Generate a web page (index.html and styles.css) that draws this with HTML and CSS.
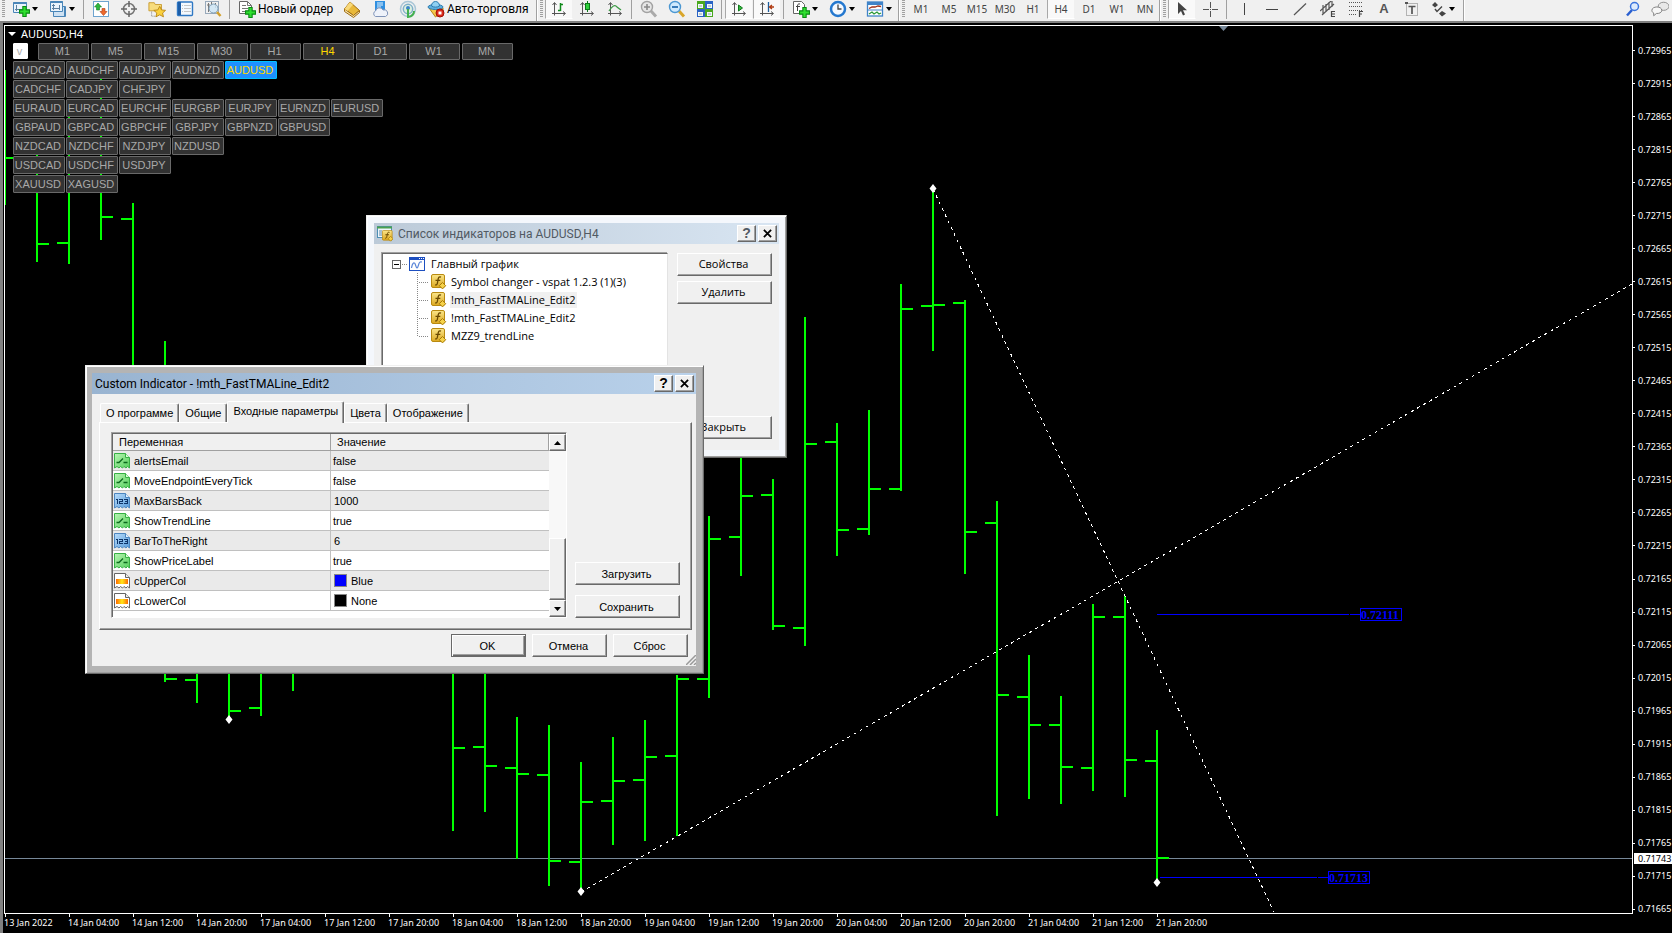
FILE: index.html
```html
<!DOCTYPE html>
<html lang="ru">
<head>
<meta charset="utf-8">
<title>AUDUSD,H4</title>
<link rel="stylesheet" href="styles.css">
</head>
<body>
<svg class="defs" aria-hidden="true">
  <defs>
    <linearGradient id="gold" x1="0" y1="0" x2="0" y2="1"><stop offset="0" stop-color="#fbe68a"/><stop offset="1" stop-color="#dca820"/></linearGradient>
    <linearGradient id="green" x1="0" y1="0" x2="1" y2="1"><stop offset="0" stop-color="#b9f5b4"/><stop offset="1" stop-color="#55cf5c"/></linearGradient>
    <linearGradient id="blue" x1="0" y1="0" x2="1" y2="1"><stop offset="0" stop-color="#b8dcfa"/><stop offset="1" stop-color="#5a9ddb"/></linearGradient>
    <linearGradient id="heat"><stop offset="0" stop-color="#ff6a00"/><stop offset=".5" stop-color="#ffe81a"/><stop offset="1" stop-color="#ff6a00"/></linearGradient>
    <symbol id="plus" viewBox="0 0 10 10"><path d="M3.5.5h3v3h3v3h-3v3h-3v-3h-3v-3h3z" fill="#2fe02f" stroke="#0a8a14"/></symbol>
    <symbol id="axes" viewBox="0 0 16 16"><path d="M3.500 2v12.500M1 12.500h13M1.500 4l2-2.500 2 2.500M12 10.500l2.500 2-2.500 2" fill="none" stroke="#555"/></symbol>
    <symbol id="func" viewBox="0 0 16 16"><rect x=".5" y=".5" width="13" height="13" rx="1.500" fill="url(#gold)" stroke="#b98a10"/><path d="M10 3.200c-1.600-.7-2.500 0-2.800 1.800l-.9 4.500c-.2 1.200-.9 1.700-2.200 1.300M4.500 6.300h4.800" fill="none" stroke="#6b4a00" stroke-width="1.300"/><path d="M11.500 8.500l3.200 3.200-3.200 3.200-3.200-3.200z" fill="#f6d24a" stroke="#a87a08"/></symbol>
    <symbol id="bool" viewBox="0 0 16 16"><path d="M.5 15V.500h11l4 4V15l-2-1.500-1.500 1.500-2-1.500L8.500 15l-2-1.500L5 15l-2-1.500z" fill="url(#green)" stroke="#36b044"/><path d="M11.500.500v4h4" fill="#d8ffd5" stroke="#36b044"/><path d="M2.500 9.500h2.500l4-4M9.500 9.500h4" fill="none" stroke="#0b6a1c" stroke-width="1.300"/></symbol>
    <symbol id="int" viewBox="0 0 16 16"><path d="M.5 15V.500h11l4 4V15l-2-1.500-1.500 1.500-2-1.500L8.500 15l-2-1.500L5 15l-2-1.500z" fill="url(#blue)" stroke="#4d86bf"/><path d="M11.500.500v4h4" fill="#e4f2ff" stroke="#4d86bf"/><path d="M2 6.500h1.500V11M5 6.500h3.500v2H5.500v2H9M10 6.500h3.500v4H10M11 8.500h2.500" fill="none" stroke="#0d3468" shape-rendering="crispEdges"/></symbol>
    <symbol id="color" viewBox="0 0 16 16"><path d="M.5 15V.500h11l4 4V15l-2-1.500-1.500 1.500-2-1.500L8.500 15l-2-1.500L5 15l-2-1.500z" fill="#fff" stroke="#666"/><path d="M11.500.500v4h4" fill="#eee" stroke="#666"/><rect x="2" y="6" width="12" height="5" fill="url(#heat)"/></symbol>
    <symbol id="shift" viewBox="0 0 16 16"><path d="M1 4l3-3 3 3-3 2.500zM8 12.500L11 10l4 2.500-4 3z" fill="#444"/><path d="M4 8l2 2.500 5-5" fill="none" stroke="#444" stroke-width="1.400"/></symbol>
  </defs>
</svg>

<header class="toolbar">
  <span class="grip"></span>
  <button class="tool drop" aria-label="Новый график"><svg viewBox="0 0 18 18"><path d="M1.500 2.500h13v10h-13z" fill="#eaf4fc" stroke="#4a86b8"/><path d="M1.500 3h13" stroke="#4a86b8" stroke-width="2"/><path d="M4.500 5v6M3 9.500h7" stroke="#5b7f9e"/><use href="#plus" x="7" y="6" width="11" height="11"/></svg></button>
  <button class="tool drop" aria-label="Профили"><svg viewBox="0 0 18 18"><path d="M4.500 6.500h12v10h-12z" fill="#cfe2f3" stroke="#4a86b8"/><path d="M1.500 1.500h12v10h-12z" fill="#eaf4fc" stroke="#4a86b8"/><path d="M1.500 2h12M16 7v9" stroke="#4a86b8" stroke-width="2"/><path d="M4.500 4v6M3 8.500h8M10.500 5v5M3 5.500h3" stroke="#5b7f9e"/></svg></button>
  <span class="sep"></span>
  <button class="tool" aria-label="Обзор рынка"><svg viewBox="0 0 18 18"><rect x="1.500" y="1.500" width="15" height="15" fill="#fff" stroke="#6ea4cf"/><path d="M6 3l3.500 4H7.500v3h-3V7h-2z" fill="#2eb83c" stroke="#16802a" stroke-width=".6"/><path d="M11.500 15.500L8 11.500h2v-3h3v3h2z" fill="#ee6a2c" stroke="#b03a10" stroke-width=".6"/></svg></button>
  <button class="tool" aria-label="Окно данных"><svg viewBox="0 0 18 18"><circle cx="9" cy="9" r="5.500" fill="none" stroke="#777" stroke-width="1.500"/><path d="M9 1v6M9 11v6M1 9h6M11 9h6" stroke="#666" stroke-width="1.500"/></svg></button>
  <button class="tool" aria-label="Навигатор"><svg viewBox="0 0 20 18"><path d="M1 2h6l1 2h7v7H1z" fill="#f7dc7c" stroke="#c79a2e"/><path d="M4 12v5h6" stroke="#777" fill="none" stroke-dasharray="1 1"/><path d="M13 6l2 4 4.500.500-3.300 3 1 4.200L13 15.500 8.800 17.700l1-4.200-3.300-3L11 10z" fill="#fbd13c" stroke="#b98412"/></svg></button>
  <button class="tool" aria-label="Терминал"><svg viewBox="0 0 18 18"><rect x="1.500" y="2" width="15" height="13.500" rx="1" fill="#f4f9fe" stroke="#2f78c4" stroke-width="1.400"/><path d="M3.500 2v13" stroke="#1d5ea8" stroke-width="3"/><path d="M6 5.500h1m1 0h7M6 8.500h1m1 0h7M6 11.500h1m1 0h7" stroke="#c6c6c6"/></svg></button>
  <button class="tool" aria-label="Тестер стратегий"><svg viewBox="0 0 18 18"><rect x="1.500" y="1.500" width="13" height="12" fill="#f1f1f1" stroke="#9ab"/><path d="M4.500 3v9M7.500 2v4M11.500 3v5M3 5h3" stroke="#777"/><circle cx="9.500" cy="8.500" r="4.500" fill="#cfe6f6" fill-opacity=".85" stroke="#7d9db5"/><path d="M13 12l3.500 4" stroke="#d2a02c" stroke-width="2.500"/></svg></button>
  <span class="sep"></span>
  <button class="tool label order"><svg viewBox="0 0 18 18"><path d="M1.500 1.500h8l4 4v8h-12z" fill="#fff" stroke="#666"/><path d="M9.500 1.500v4h4M4 5.500h4M4 8.500h6M4 11.500h4" stroke="#777" fill="none"/><use href="#plus" x="7" y="7" width="11" height="11"/></svg>Новый ордер</button>
  <button class="tool" aria-label="MetaEditor"><svg viewBox="0 0 18 18"><path d="M7 2l9.500 8.500-6 5L1.500 9z" fill="#e9b93a" stroke="#a06c10"/><path d="M1.500 9v2.500l9 6 6-5v-2l-6 5z" fill="#f5e4ae" stroke="#a06c10"/><path d="M7 2L1.500 9l3 2L10 4.700z" fill="#f8d97a"/></svg></button>
  <button class="tool" aria-label="Облако"><svg viewBox="0 0 18 18"><rect x="4" y="1" width="10" height="10" fill="#2f8fe0"/><path d="M6 3h6M6 5h6M6 7h4" stroke="#e4f3ff"/><path d="M4.500 16.500a3 3 0 010-5.500 4 4 0 017.500-1 3.300 3.300 0 012.500 6.500z" fill="#eef2fa" stroke="#7f93b8"/></svg></button>
  <button class="tool" aria-label="Сигналы"><svg viewBox="0 0 18 18"><circle cx="9" cy="9" r="7.500" fill="none" stroke="#a9c6d6" stroke-width="1.500"/><circle cx="9" cy="9" r="4.700" fill="#dcefe0" stroke="#7fb0c8" stroke-width="1.500"/><circle cx="9" cy="8" r="2" fill="#3c86c8"/><path d="M9 9v8c4-.6 6-3 6-6" fill="none" stroke="#42b050" stroke-width="2"/></svg></button>
  <button class="tool label auto"><svg viewBox="0 0 18 18"><path d="M2 8l6.500 9L16 11V8z" fill="#f4c84a" stroke="#b58418"/><ellipse cx="8.500" cy="7" rx="7.500" ry="2.500" fill="#5fb0e0" stroke="#2d7cb0"/><path d="M4.500 6c0-6 8-6 8 0-2 1.500-6 1.500-8 0z" fill="#8fd0f2" stroke="#2d7cb0"/><circle cx="13" cy="13" r="4" fill="#dd2a1a" stroke="#a01208"/><rect x="11.500" y="11.500" width="3" height="3" fill="#fff"/></svg>Авто-торговля</button>
  <span class="edge"></span>
  <span class="grip"></span>
  <button class="tool on" aria-label="Бары"><svg viewBox="0 0 16 16"><use href="#axes"/><path d="M9.500 2v8M7 9.500h2.500M9.500 3.500H12" stroke="#108a1c" stroke-width="1.500"/></svg></button>
  <button class="tool" aria-label="Свечи"><svg viewBox="0 0 16 16"><use href="#axes"/><path d="M8.500 0v11" stroke="#0a7a18"/><rect x="6.500" y="2.500" width="4" height="6" fill="#2fd03c" stroke="#0a7a18"/></svg></button>
  <button class="tool" aria-label="Линия"><svg viewBox="0 0 16 16"><use href="#axes"/><path d="M2 10c3-5 6-7 8-4l4 3" fill="none" stroke="#3a9a44" stroke-width="1.300"/></svg></button>
  <span class="sep"></span>
  <button class="tool" aria-label="Увеличить"><svg viewBox="0 0 18 18"><path d="M11 11l5 5.500" stroke="#aaa" stroke-width="3"/><circle cx="7" cy="7" r="5.500" fill="#e6e6e6" stroke="#a2a2a2" stroke-width="1.400"/><path d="M7 4v6M4 7h6" stroke="#8a8a8a" stroke-width="1.600"/></svg></button>
  <button class="tool" aria-label="Уменьшить"><svg viewBox="0 0 18 18"><path d="M11 11l5 5.500" stroke="#d9a62a" stroke-width="3"/><circle cx="7" cy="7" r="5.500" fill="#cfeafd" stroke="#4b97d2" stroke-width="1.400"/><path d="M4 7h6" stroke="#276fb0" stroke-width="1.800"/></svg></button>
  <button class="tool" aria-label="Плитка"><svg viewBox="0 0 18 18"><path d="M1 1h8v8H1zM9 9h8v8H9z" fill="#4aa81e"/><path d="M9 1h8v8H9zM1 9h8v8H1z" fill="#2a63c4"/><path d="M2 4h5v4H2zM11 4h5v4h-5zM2 12h5v4H2zM11 12h5v4h-5z" fill="#f2f6fb"/><path d="M3 6h3M12 6h3M3 14h3M12 14h3" stroke="#8aa"/></svg></button>
  <span class="sep"></span>
  <button class="tool on" aria-label="Автопрокрутка"><svg viewBox="0 0 16 16"><use href="#axes"/><path d="M7.500 4v6l4-3z" fill="#35b83e" stroke="#107a1c"/></svg></button>
  <button class="tool on" aria-label="Сдвиг графика"><svg viewBox="0 0 16 16"><use href="#axes"/><path d="M9.500 1v10" stroke="#1c5c9c" stroke-width="1.300"/><path d="M15 6h-4M13 4l-2.500 2L13 8" fill="none" stroke="#b03a10" stroke-width="1.300"/></svg></button>
  <span class="sep"></span>
  <button class="tool drop" aria-label="Индикаторы"><svg viewBox="0 0 18 18"><path d="M1.500 1.500h8l3 3v9h-11z" fill="#fff" stroke="#666"/><path d="M8 4c-2-.6-2.300.500-2.500 2v5M4 6.500h4" stroke="#444" fill="none"/><use href="#plus" x="7" y="7" width="11" height="11"/></svg></button>
  <button class="tool drop" aria-label="Периоды"><svg viewBox="0 0 18 18"><circle cx="9" cy="9" r="7" fill="#f4f9ff" stroke="#2478cf" stroke-width="2.500"/><path d="M9 4.500V9h3.500" fill="none" stroke="#444" stroke-width="1.300"/></svg></button>
  <button class="tool drop" aria-label="Шаблоны"><svg viewBox="0 0 18 18"><rect x="1.500" y="2" width="15" height="14" fill="#fff" stroke="#3f83c8" stroke-width="1.300"/><path d="M1 3.500h16" stroke="#3f83c8" stroke-width="3"/><path d="M2 10h14" stroke="#3f83c8"/><path d="M3 8.500l3-1.500h3l3-1 3 .5" stroke="#a03018" fill="none" stroke-width="1.300"/><path d="M3 14l3-2 2 2 3-2 2 2 2-1" stroke="#2c9838" fill="none" stroke-width="1.200"/></svg></button>
  <span class="edge"></span>
  <span class="grip"></span>
  <button class="tool tf">M1</button><button class="tool tf">M5</button><button class="tool tf">M15</button><button class="tool tf">M30</button><button class="tool tf">H1</button><button class="tool tf on">H4</button><button class="tool tf">D1</button><button class="tool tf">W1</button><button class="tool tf">MN</button>
  <span class="edge"></span>
  <span class="grip"></span>
  <button class="tool on" aria-label="Курсор"><svg viewBox="0 0 16 16"><path d="M4 1v12l3-3 2 4.500 2-1L9 9.300h4z" fill="#444"/></svg></button>
  <button class="tool" aria-label="Перекрестие"><svg viewBox="0 0 16 16"><path d="M8.500 1v6M8.500 10v6M1 8.500h6M10 8.500h6M8 8.500h1" stroke="#555"/></svg></button>
  <span class="sep"></span>
  <button class="tool" aria-label="Вертикальная линия"><svg viewBox="0 0 16 16"><path d="M8.500 2v12" stroke="#444"/></svg></button>
  <button class="tool" aria-label="Горизонтальная линия"><svg viewBox="0 0 16 16"><path d="M2 8.500h12" stroke="#444"/></svg></button>
  <button class="tool" aria-label="Трендовая линия"><svg viewBox="0 0 16 16"><path d="M2 14L14 2.500" stroke="#555" stroke-width="1.200"/></svg></button>
  <button class="tool" aria-label="Канал"><svg viewBox="0 0 16 16"><path d="M0 10L11 0M2 14L14 3M3 4v9M6 3v8M9 1v8M12 0v6" stroke="#555" stroke-width="1.200"/><path d="M15 10.500h-3.500v5H15M11.500 13H15" fill="none" stroke="#444" stroke-width="1.200"/></svg></button>
  <button class="tool" aria-label="Фибоначчи"><svg viewBox="0 0 16 16"><path d="M1 1.500h14M1 5.500h14M1 9.500h14M1 13.500h8" stroke="#555" stroke-dasharray="1 1"/><path d="M15 10.500h-3.500V16M11.500 13H14" fill="none" stroke="#444" stroke-width="1.200"/></svg></button>
  <button class="tool letter">A</button>
  <button class="tool" aria-label="Метка"><svg viewBox="0 0 16 16"><rect x="2.500" y="2.500" width="11" height="12" fill="none" stroke="#777" stroke-dasharray="1 1"/><path d="M1 1h3v2H1z" fill="#555"/><path d="M4.500 5.500h7M8 5.500V13" stroke="#555" stroke-width="1.700" fill="none"/></svg></button>
  <button class="tool drop" aria-label="Стрелки"><svg viewBox="0 0 16 16"><use href="#shift"/></svg></button>
  <span class="edge"></span>
  <span class="fill"></span>
  <button class="tool" aria-label="Поиск"><svg viewBox="0 0 16 16"><path d="M7 9l-5 5.500" stroke="#2a5fd0" stroke-width="2.500"/><circle cx="9.500" cy="5.500" r="4" fill="#dceafc" stroke="#3b74dc" stroke-width="1.500"/></svg></button>
  <button class="tool chat" aria-label="Сообщество"><svg viewBox="0 0 20 18"><ellipse cx="14" cy="6" rx="6" ry="4.500" fill="#e8e8e8" stroke="#888"/><path d="M1 10.500c0-5 11-5 11 0 0 2.500-3 3.700-6 3.500l-3 2.500v-3c-1.300-.6-2-1.600-2-3z" fill="#f6f6f6" stroke="#777"/></svg></button>
</header>

<main class="chart">
  <section class="plot">
    <svg class="series" width="100%" height="100%" aria-label="AUDUSD H4">
      <g transform="translate(-5 -26)">
        <path class="price-line" d="M5 858.500H1640"/>
        <path class="bars" d="M5 70V205M5 158h9
        M37 150V262M37 244h12 M69 115V264M57 243h12 M101 76V240M101 217h12 M133 203V640M121 219h12
        M165 341V682M165 679h12 M197 600V703M185 680h12 M229 600V718M229 711h12 M261 600V716M249 708h12 M293 600V691
        M453 600V831M453 748h12 M485 600V812M473 747h12M485 766h12 M517 717V859M505 768h12M517 774h12
        M549 725V886M537 775h12M549 861h12 M581 762V888M569 862h12M581 802h12 M613 737V845M601 801h12M613 781h12
        M645 720V841M633 780h12M645 757h12 M677 675V836M665 756h12M677 679h12 M709 516V698M697 679h12M709 539h12
        M741 440V576M729 537h12M741 496h12 M773 479V630M761 495h12M773 626h12 M805 317V646M793 628h12M805 444h12
        M837 423V556M825 442h12M837 530h12 M869 410V535M857 529h12M869 489h12 M901 284V491M889 489h12M901 309h12
        M933 190V351M921 306h12M933 305h12 M965 300V574M953 303h12M965 532h12 M997 501V816M985 523h12M997 695h12
        M1029 655V799M1017 697h12M1029 725h12 M1061 696V804M1049 725h12M1061 767h12 M1093 604V791M1081 768h12M1093 617h12
        M1125 596V797M1113 617h12M1125 760h12 M1157 730V880M1145 761h12M1157 858h12"/>
        <path class="trend" d="M933 189L1274 912M581 892L1632 284"/>
        <path class="marks" d="M933 184l3.500 4.500-3.500 4.500-3.500-4.500zM229 715l3.500 4.500-3.500 4.500-3.500-4.500zM581 887l3.500 4.500-3.500 4.500-3.500-4.500zM1157 878l3.500 4.500-3.500 4.500-3.500-4.500z"/>
        <path class="levels" d="M1157 614.500h192m1 0h10M1160 877.500h157m1 0h10M1360.500 608.500h41v12h-41zM1328.500 871.500h41v12h-41z"/>
        <text class="level-text" x="1361" y="619">0.72111</text>
        <text class="level-text" x="1329" y="882">0.71713</text>
        <path d="M1219 26h9l-4.500 5z" fill="#778899"/>
      </g>
    </svg>

    <div class="panel">
      <h1 class="symbol">AUDUSD,H4</h1>
      <div class="row frames">
        <button class="toggle">v</button>
        <button>M1</button><button>M5</button><button>M15</button><button>M30</button><button>H1</button><button class="active">H4</button><button>D1</button><button>W1</button><button>MN</button>
      </div>
      <div class="row"><button>AUDCAD</button><button>AUDCHF</button><button>AUDJPY</button><button>AUDNZD</button><button class="current">AUDUSD</button></div>
      <div class="row"><button>CADCHF</button><button>CADJPY</button><button>CHFJPY</button></div>
      <div class="row"><button>EURAUD</button><button>EURCAD</button><button>EURCHF</button><button>EURGBP</button><button>EURJPY</button><button>EURNZD</button><button>EURUSD</button></div>
      <div class="row"><button>GBPAUD</button><button>GBPCAD</button><button>GBPCHF</button><button>GBPJPY</button><button>GBPNZD</button><button>GBPUSD</button></div>
      <div class="row"><button>NZDCAD</button><button>NZDCHF</button><button>NZDJPY</button><button>NZDUSD</button></div>
      <div class="row"><button>USDCAD</button><button>USDCHF</button><button>USDJPY</button></div>
      <div class="row"><button>XAUUSD</button><button>XAGUSD</button></div>
    </div>
  </section>

  <ol class="times">
    <li>13 Jan 2022</li><li>14 Jan 04:00</li><li>14 Jan 12:00</li><li>14 Jan 20:00</li><li>17 Jan 04:00</li><li>17 Jan 12:00</li><li>17 Jan 20:00</li><li>18 Jan 04:00</li><li>18 Jan 12:00</li><li>18 Jan 20:00</li><li>19 Jan 04:00</li><li>19 Jan 12:00</li><li>19 Jan 20:00</li><li>20 Jan 04:00</li><li>20 Jan 12:00</li><li>20 Jan 20:00</li><li>21 Jan 04:00</li><li>21 Jan 12:00</li><li>21 Jan 20:00</li>
  </ol>

  <div class="scale">
    <ol class="prices">
      <li>0.72965</li><li>0.72915</li><li>0.72865</li><li>0.72815</li><li>0.72765</li><li>0.72715</li><li>0.72665</li><li>0.72615</li><li>0.72565</li><li>0.72515</li><li>0.72465</li><li>0.72415</li><li>0.72365</li><li>0.72315</li><li>0.72265</li><li>0.72215</li><li>0.72165</li><li>0.72115</li><li>0.72065</li><li>0.72015</li><li>0.71965</li><li>0.71915</li><li>0.71865</li><li>0.71815</li><li>0.71765</li><li>0.71715</li><li>0.71665</li>
    </ol>
    <span class="bid">0.71743</span>
  </div>
</main>

<section class="window list-window" aria-label="Список индикаторов">
  <header class="caption">
    <svg class="caption-icon" viewBox="0 0 16 16"><rect x=".5" y=".5" width="14" height="11" fill="#eef5fb" stroke="#4d8fb5"/><path d="M0 1.500h15" stroke="#4ba04f" stroke-width="2"/><path d="M2 5h3M2 7h3M2 9h3" stroke="#5d89a8"/><use href="#func" x="5" y="4" width="12" height="12"/></svg>
    <h2>Список индикаторов на AUDUSD,H4</h2>
    <button class="sys">?</button><button class="sys" aria-label="Закрыть окно"><svg viewBox="0 0 10 10"><path d="M1 1l8 8M9 1L1 9" stroke="#000" stroke-width="2"/></svg></button>
  </header>
  <div class="list-body">
    <ul class="tree">
      <li class="root"><svg class="fold" viewBox="0 0 16 9"><rect x=".5" y=".5" width="8" height="8" fill="#fff" stroke="#666"/><path d="M2 4.500h5" stroke="#000"/><path d="M10 4.500h6" stroke="#888" stroke-dasharray="1 1"/></svg><svg class="node" viewBox="0 0 16 14"><rect x=".5" y=".5" width="15" height="13" fill="#fff" stroke="#1d4fc0"/><path d="M0 1.500h16" stroke="#1d4fc0" stroke-width="3"/><path d="M10 1.500h1m1 0h1m1 0h1" stroke="#fff"/><path d="M2.500 11c1-6 3-6.500 4-3s2 4 3 0 2-3 3.500-3" fill="none" stroke="#5a86d8" stroke-width="1.200"/></svg><span>Главный график</span></li>
      <li><svg class="node" viewBox="0 0 16 16"><use href="#func"/></svg><span>Symbol changer - vspat 1.2.3 (1)(3)</span></li>
      <li><svg class="node" viewBox="0 0 16 16"><use href="#func"/></svg><span class="picked">!mth_FastTMALine_Edit2</span></li>
      <li><svg class="node" viewBox="0 0 16 16"><use href="#func"/></svg><span>!mth_FastTMALine_Edit2</span></li>
      <li><svg class="node" viewBox="0 0 16 16"><use href="#func"/></svg><span>MZZ9_trendLine</span></li>
    </ul>
    <div class="side">
      <button class="push">Свойства</button>
      <button class="push">Удалить</button>
      <button class="push last">Закрыть</button>
    </div>
  </div>
</section>

<section class="window input-window" aria-label="Custom Indicator">
  <header class="caption">
    <h2>Custom Indicator - !mth_FastTMALine_Edit2</h2>
    <button class="sys">?</button><button class="sys" aria-label="Закрыть окно"><svg viewBox="0 0 10 10"><path d="M1 1l8 8M9 1L1 9" stroke="#000" stroke-width="2"/></svg></button>
  </header>
  <div class="input-body">
    <div class="tabs" role="tablist">
      <button role="tab">О программе</button><button role="tab">Общие</button><button role="tab" class="selected" aria-selected="true">Входные параметры</button><button role="tab">Цвета</button><button role="tab">Отображение</button>
    </div>
    <div class="page">
      <div class="grid">
        <table>
          <thead><tr><th>Переменная</th><th>Значение</th></tr></thead>
          <tbody>
            <tr><td><div class="cell"><svg viewBox="0 0 16 16"><use href="#bool"/></svg>alertsEmail</div></td><td>false</td></tr>
            <tr><td><div class="cell"><svg viewBox="0 0 16 16"><use href="#bool"/></svg>MoveEndpointEveryTick</div></td><td>false</td></tr>
            <tr><td><div class="cell"><svg viewBox="0 0 16 16"><use href="#int"/></svg>MaxBarsBack</div></td><td class="num">1000</td></tr>
            <tr><td><div class="cell"><svg viewBox="0 0 16 16"><use href="#bool"/></svg>ShowTrendLine</div></td><td>true</td></tr>
            <tr><td><div class="cell"><svg viewBox="0 0 16 16"><use href="#int"/></svg>BarToTheRight</div></td><td class="num">6</td></tr>
            <tr><td><div class="cell"><svg viewBox="0 0 16 16"><use href="#bool"/></svg>ShowPriceLabel</div></td><td>true</td></tr>
            <tr><td><div class="cell"><svg viewBox="0 0 16 16"><use href="#color"/></svg>cUpperCol</div></td><td class="num"><div class="cell"><i class="swatch upper"></i>Blue</div></td></tr>
            <tr><td><div class="cell"><svg viewBox="0 0 16 16"><use href="#color"/></svg>cLowerCol</div></td><td class="num"><div class="cell"><i class="swatch lower"></i>None</div></td></tr>
          </tbody>
        </table>
        <div class="scroll">
          <button aria-label="Вверх"><svg viewBox="0 0 7 4"><path d="M0 4h7L3.500 0z"/></svg></button>
          <span class="track"></span>
          <span class="thumb"></span>
          <button aria-label="Вниз"><svg viewBox="0 0 7 4"><path d="M0 0h7L3.500 4z"/></svg></button>
        </div>
      </div>
      <div class="files">
        <button class="push">Загрузить</button>
        <button class="push">Сохранить</button>
      </div>
    </div>
    <footer class="actions">
      <button class="push default">OK</button>
      <button class="push">Отмена</button>
      <button class="push">Сброс</button>
    </footer>
  </div>
  <svg class="resize" viewBox="0 0 10 10"><path d="M0 10L10 0M4 10l6-6M8 10l2-2" stroke="#999" stroke-width="1.500"/></svg>
</section>
</body>
</html>
```
FILE: styles.css
```css
* { box-sizing: border-box; }
body {
  margin: 0;
  height: 100vh;
  display: flex;
  flex-direction: column;
  overflow: hidden;
  position: relative;
  background: #000;
  color: #000;
  font: 11px/14px "Liberation Sans", sans-serif;
}
button { font: inherit; color: inherit; margin: 0; padding: 0; border: 0; background: none; white-space: nowrap; }
ul, ol { list-style: none; margin: 0; padding: 0; }
h1, h2 { margin: 0; font-weight: 400; }
svg { display: block; flex: none; }
.defs { position: absolute; width: 0; height: 0; }

/* Toolbar */
.toolbar {
  flex: none;
  display: flex;
  align-items: flex-start;
  height: 23px;
  overflow: hidden;
  background: #f0f0f0;
  border-bottom: 2px solid #808080;
}
.tool {
  flex: none;
  display: flex;
  align-items: center;
  justify-content: center;
  width: 28px;
  height: 19px;
  padding-bottom: 1px;
}
.tool svg { width: 18px; height: 18px; }
.tool svg[viewBox="0 0 16 16"] { width: 16px; height: 16px; }
.tool.on { background: #f9f9f9; border-left: 1px solid #a8a8a8; border-right: 1px solid #f0f0f0; border-bottom: 1px solid #fff; }
.drop { width: 37px; justify-content: flex-start; gap: 2px; padding-left: 5px; }
.drop::after { content: ""; border: 3px solid transparent; border-top: 4px solid #000; border-bottom: 0; }
.label { font: 12px/16px Roboto, sans-serif; justify-content: flex-start; gap: 2px; padding-left: 5px; }
.order { width: 105px; }
.auto { width: 114px; }
.tf { font: 10px/14px "Noto Sans", sans-serif; color: #444; }
.letter { font: bold 13px/16px "Liberation Sans", sans-serif; color: #555; }
.grip { flex: none; width: 7px; height: 18px; background: repeating-linear-gradient(#a0a0a0 0 1px, #f0f0f0 1px 2px) 2px 0 / 3px 100% no-repeat; }
.sep { flex: none; width: 6px; height: 19px; background: linear-gradient(#a0a0a0, #a0a0a0) 2px 0 / 1px 100% no-repeat; }
.edge { flex: none; width: 2px; height: 21px; border-left: 1px solid #a0a0a0; background: #fff; }
.fill { flex: 1; }
.chat { width: 25px; }

/* Chart */
.chart {
  flex: 1;
  min-height: 0;
  display: grid;
  grid-template: minmax(0, 1fr) 19px / minmax(0, 1fr) 39px;
  padding: 2px 0 0 1px;
  border-left: 3px solid #808080;
  color: #fff;
}
.plot { position: relative; overflow: hidden; border: 1px solid #fff; }
.series { position: absolute; inset: 0; }
.price-line { stroke: #778899; }
.bars { stroke: #0f0; stroke-width: 2; shape-rendering: crispEdges; }
.trend { stroke: #fff; stroke-dasharray: 3 4; shape-rendering: crispEdges; }
.marks { fill: #fff; }
.levels { stroke: #00f; fill: none; shape-rendering: crispEdges; }
.level-text { fill: #00f; font: bold 12px "Liberation Serif", serif; }
.times, .prices, .bid { font: 9px/12px "Noto Sans", sans-serif; }
.times { display: flex; overflow: hidden; }
.times li { flex: none; width: 64px; padding-top: 3px; white-space: nowrap; background: linear-gradient(#fff, #fff) 1px 0 / 1px 3px no-repeat; }
.scale { grid-area: 1 / 2 / 3 / 3; position: relative; display: flex; padding: 9px 0 7px; }
.prices { flex: 1; display: flex; flex-direction: column; }
.prices li { flex: 1; display: flex; align-items: center; gap: 3px; }
.prices li::before { content: ""; width: 2px; height: 1px; background: #fff; }
.bid { position: absolute; right: 0; bottom: 69px; width: 38px; padding-left: 4px; background: #fff; color: #000; line-height: 11px; }

.panel { position: relative; display: flex; flex-direction: column; align-items: flex-start; gap: 1px; padding: 0 0 0 8px; }
.symbol { font: 11px/16px "Noto Sans", sans-serif; display: flex; align-items: center; gap: 5px; margin-left: -5px; }
.symbol::before { content: ""; border: 4px solid transparent; border-top-color: #fff; border-bottom: 0; }
.row { display: flex; gap: 1px; color: #a8a8a8; }
.row button { width: 52px; height: 18px; padding-right: 2px; background: #323232; border: 1px solid #696969; border-radius: 1px; line-height: 16px; }
.frames { gap: 2px; }
.frames button { width: 51px; height: 17px; line-height: 15px; }
.frames .toggle { width: 15px; height: 16px; margin-right: 8px; background: #fff; border-color: #fff; color: #b0b0b0; }
.frames .active { color: #ffd700; }
.row .current { background: #1e90ff; border-color: #00bfff; color: #ffd700; }

/* Windows */
.window { position: absolute; border: 1px solid; border-color: #f0f0f0 #696969 #696969 #f0f0f0; }
.caption { display: flex; align-items: center; gap: 2px; height: 21px; padding: 0 2px; }
.caption h2 { flex: 1; font: 12px/16px Roboto, sans-serif; }
.sys { width: 19px; height: 17px; display: flex; align-items: center; justify-content: center; font: bold 14px/15px "Liberation Sans", sans-serif; }
.sys svg { width: 9px; height: 9px; }
.sys, .push, .scroll button, .thumb { background: #f0f0f0; border: 1px solid; border-color: #fff #696969 #696969 #fff; box-shadow: inset -1px -1px #a0a0a0; }
.push { height: 23px; padding-right: 2px; }

.list-window {
  left: 366px; top: 215px; width: 421px; height: 243px;
  padding: 7px;
  background: #f4f7fc;
  box-shadow: inset 1px 1px #fff, inset -1px -1px #a0a0a0;
  font: 11px/16px "Open Sans", sans-serif;
}
.list-window .caption { background: linear-gradient(90deg, #bccad8, #d8e5f2); color: #525a63; }
.caption-icon { width: 16px; height: 16px; margin: 0 3px 0 1px; }
.list-body { display: flex; gap: 9px; height: 206px; padding: 9px 7px 11px 8px; background: #f0f0f0; }
.tree { flex: 1; padding: 1px 0 0 9px; background: #fff; border: 1px solid; border-color: #696969 #e3e3e3 #fff #696969; box-shadow: -1px -1px #a0a0a0; }
.tree li { display: flex; align-items: center; height: 18px; margin-left: 25px; gap: 3px; }
.tree li:not(.root)::before { content: ""; width: 11px; height: 18px; background: repeating-linear-gradient(#888 0 1px, #fff 1px 2px) 0 0 / 1px 100% no-repeat, repeating-linear-gradient(90deg, #888 0 1px, #fff 1px 2px) 0 9px / 100% 1px no-repeat; }
.tree li:last-child::before { background-size: 1px 10px, 100% 1px; }
.tree .root { margin-left: 0; gap: 1px; }
.fold { width: 16px; height: 9px; }
.node { width: 16px; height: 16px; }
.tree span { padding: 0 1px; white-space: nowrap; }
.root span { margin-left: 4px; }
.picked { background: #f0f0f0; }
.side { flex: none; display: flex; flex-direction: column; gap: 5px; width: 95px; }
.side .push { line-height: 18px; padding-bottom: 2px; }
.side .last { margin-top: auto; }

.input-window {
  left: 85px; top: 365px; width: 619px; height: 309px;
  padding: 7px 7px 7px 6px;
  background: #b4b4b4;
  box-shadow: inset 1px 1px #fff, inset -1px -1px #a0a0a0;
}
.input-window .caption { background: linear-gradient(90deg, #99b4d1, #b9d1ea); padding-left: 3px; }
.input-body { height: 272px; padding: 7px 4px 9px 7px; background: #f0f0f0; }
.tabs { display: flex; align-items: flex-end; height: 21px; padding-left: 1px; }
.tabs button { height: 19px; padding: 0 5px; border: 1px solid; border-color: #fff #696969 transparent #fff; border-bottom: 0; border-radius: 2px 2px 0 0; box-shadow: inset -1px 0 #a0a0a0; }
.tabs .selected { position: relative; z-index: 1; height: 22px; margin-bottom: -1px; padding: 0 5px 3px; background: #f0f0f0; }
.page { display: flex; gap: 8px; height: 208px; padding: 9px 11px 11px; border: 1px solid; border-color: #fff #696969 #696969 #fff; box-shadow: inset -1px -1px #a0a0a0; }
.grid { flex: 1; display: flex; background: #fff; border: 1px solid; border-color: #a0a0a0 #fff #fff #a0a0a0; box-shadow: inset 1px 1px #696969; padding: 1px 0 0 1px; }
table { flex: 1; border-collapse: separate; border-spacing: 0; table-layout: fixed; height: 177px; }
th, td { padding: 0; text-align: left; font-weight: 400; }
th { height: 17px; padding-left: 6px; background: #f0f0f0; border-right: 1px solid #a0a0a0; border-bottom: 1px solid #a0a0a0; }
th:first-child { width: 218px; }
td { height: 20px; padding-left: 2px; border-bottom: 1px solid #c0c0c0; }
td:first-child { padding-left: 1px; border-right: 1px solid #c0c0c0; }
td.num { padding-left: 3px; }
tbody tr:nth-child(odd) { background: #eaeaea; }
.cell { display: flex; align-items: center; gap: 4px; }
.cell svg { width: 16px; height: 16px; }
.swatch { width: 13px; height: 13px; border: 1px solid #888; }
.upper { background: #00f; }
.lower { background: #000; }
.scroll { flex: none; display: flex; flex-direction: column; width: 17px; background: #f8f8f8; }
.scroll button { height: 17px; display: flex; align-items: center; justify-content: center; }
.scroll svg { width: 7px; height: 4px; }
.track { flex: 1; }
.thumb { height: 62px; }
.files { flex: none; display: flex; flex-direction: column; justify-content: flex-end; gap: 10px; width: 105px; }
.actions { display: flex; justify-content: flex-end; gap: 6px; padding: 4px 4px 0 0; }
.actions .push { width: 75px; }
.actions .default { border-color: #696969; box-shadow: inset 1px 1px #fff, inset -1px -1px #696969, inset -2px -2px #a0a0a0; }
.resize { position: absolute; right: 7px; bottom: 8px; width: 10px; height: 10px; }
```
